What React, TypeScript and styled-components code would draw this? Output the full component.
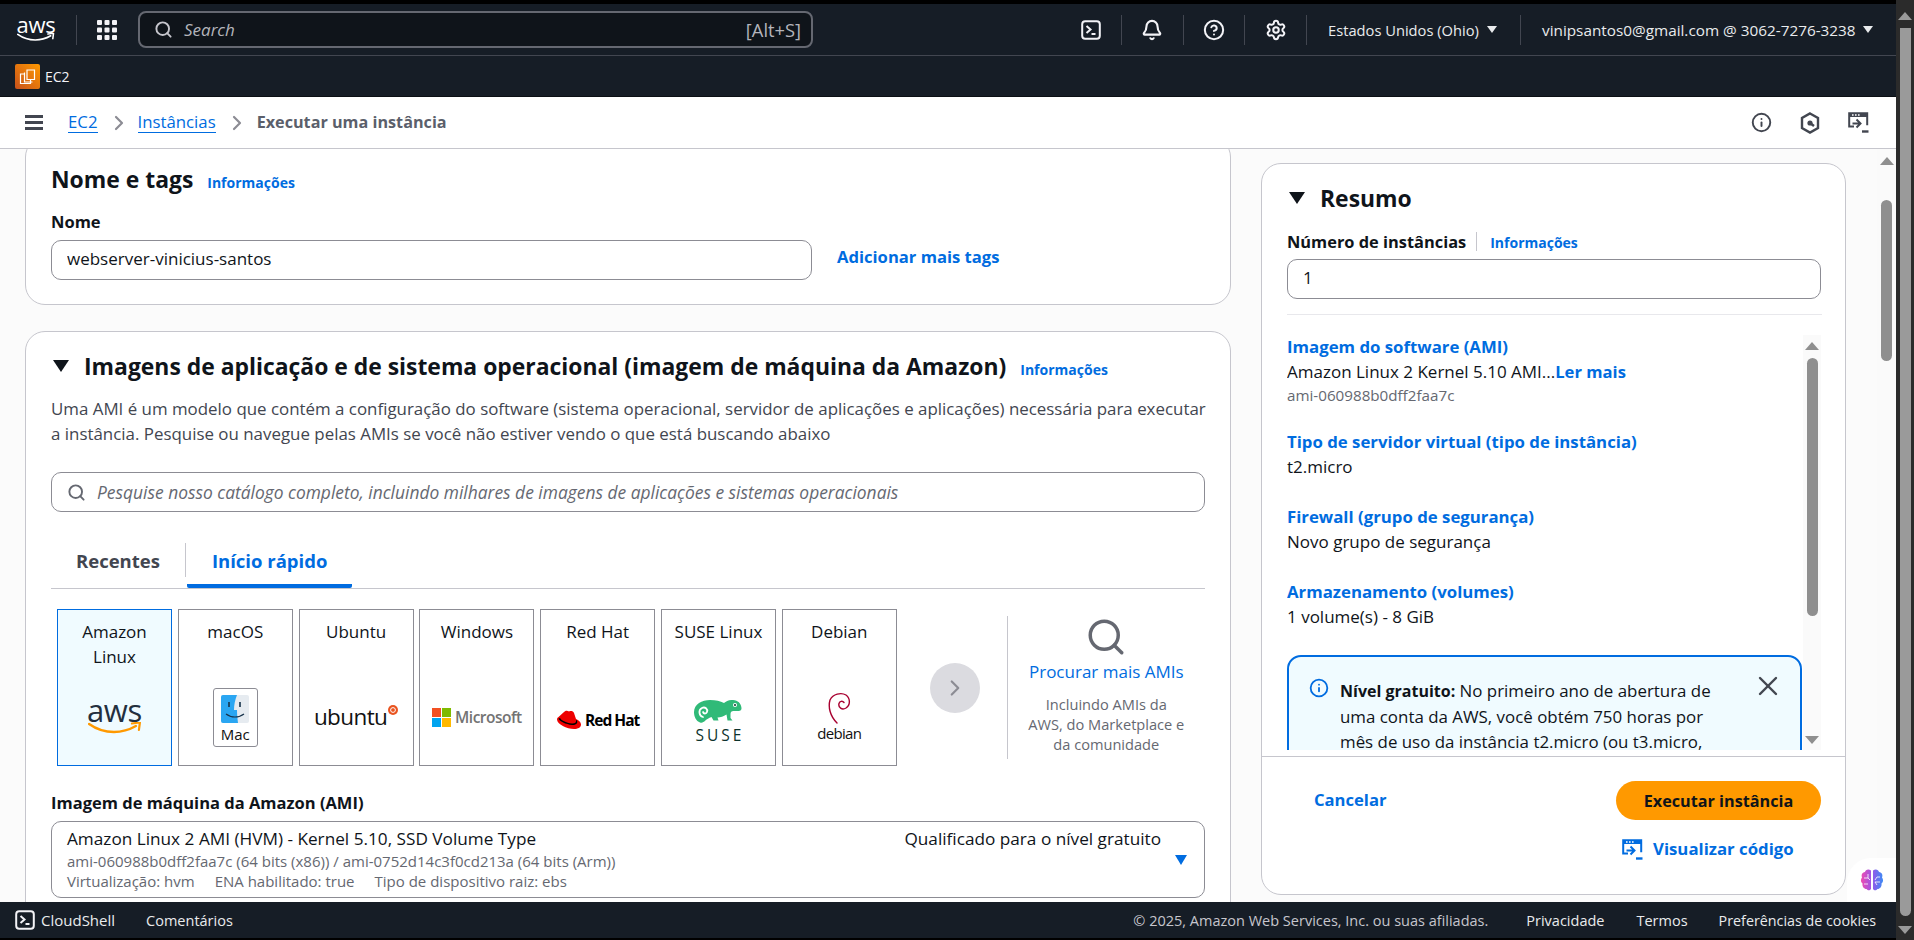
import React from 'react';
import styled, { createGlobalStyle } from 'styled-components';
import { Bell, ChevronRight, CircleHelp, Info, Search, Settings, X } from 'lucide-react';

const FONT = '"Open Sans", "Noto Sans", sans-serif';
const BLUE = '#006ce0';
const INK = '#0f141a';
const GREY = '#424650';
const SOFT = '#656871';
const NAVY = '#161d26';

const GlobalStyle = createGlobalStyle`
  * { box-sizing: border-box; }
  html, body { margin: 0; padding: 0; height: 940px; overflow: hidden; background: #2b2b2b; }
  body { font-family: ${FONT}; font-size: 17px; color: ${INK}; }
`;

const Shell = styled.div`
  display: flex;
  width: 1914px;
  height: 940px;
`;
const Page = styled.div`
  display: flex;
  flex-direction: column;
  width: 1896px;
  height: 940px;
`;
const BlackStrip = styled.div<{ $h: number }>`
  height: ${p => p.$h}px;
  background: #000;
  flex: none;
`;

/* ---------- scrollbars ---------- */
const Arrow = styled.div<{ $down?: boolean; $color: string; $w: number }>`
  width: 0;
  height: 0;
  flex: none;
  border-left: ${p => p.$w}px solid transparent;
  border-right: ${p => p.$w}px solid transparent;
  ${p => (p.$down ? `border-top: 8px solid ${p.$color};` : `border-bottom: 8px solid ${p.$color};`)}
`;
const PageBar = styled.div`
  width: 18px;
  height: 940px;
  background: #2b2b2b;
  display: flex;
  flex-direction: column;
  align-items: center;
  padding-top: 12px;
`;
const PageThumb = styled.div`
  width: 11px;
  height: 888px;
  margin: 8px 0 10px;
  background: #9a9a9a;
  border-radius: 0 0 6px 6px;
`;
const ContentBar = styled.div`
  width: 19px;
  flex: none;
  display: flex;
  flex-direction: column;
  align-items: center;
  padding-top: 8px;
  background: #fafafa;
`;
const ContentThumb = styled.div`
  width: 11px;
  height: 161px;
  margin-top: 35px;
  background: #8f8f8f;
  border-radius: 6px;
`;

/* ---------- top navigation ---------- */
const TopNav = styled.header`
  height: 52px;
  flex: none;
  display: flex;
  align-items: center;
  background: ${NAVY};
  border-bottom: 1px solid #424650;
  color: #e9ebed;
`;
const LogoWrap = styled.div<{ $w: number }>`
  width: ${p => p.$w}px;
  display: flex;
  flex-direction: column;
  align-items: center;
  flex: none;
`;
const LogoWord = styled.span<{ $size: number; $color: string }>`
  font-family: "Open Sans", sans-serif;
  font-size: ${p => p.$size}px;
  line-height: ${p => Math.round(p.$size * 0.72)}px;
  font-weight: 500;
  letter-spacing: -0.3px;
  color: ${p => p.$color};
`;
const NavDivider = styled.div<{ $ml: number }>`
  width: 1px;
  height: 30px;
  margin-left: ${p => p.$ml}px;
  background: #424650;
  flex: none;
`;
const Slot = styled.div<{ $ml: number; $c?: string }>`
  margin-left: ${p => p.$ml}px;
  display: flex;
  flex: none;
  color: ${p => p.$c ?? '#f3f3f7'};
`;
const TopSearch = styled.div`
  width: 675px;
  height: 37px;
  margin-left: 21px;
  display: flex;
  align-items: center;
  padding: 0 10px 0 14px;
  background: #0f141a;
  border: 2px solid #656871;
  border-radius: 8px;
  flex: none;
`;
const TopSearchHint = styled.span`
  margin-left: 11px;
  flex: 1;
  font-style: italic;
  font-size: 17px;
  color: #b4b4bb;
`;
const Shortcut = styled.span`
  font-size: 18.3px;
  color: #b4b4bb;
`;
const NavText = styled.span<{ $ml: number; $w: number; $size: number }>`
  margin-left: ${p => p.$ml}px;
  width: ${p => p.$w}px;
  flex: none;
  font-size: ${p => p.$size}px;
  white-space: nowrap;
  color: #e9ebed;
`;
const NavCaret = styled.div`
  width: 0;
  height: 0;
  border-left: 5px solid transparent;
  border-right: 5px solid transparent;
  border-top: 7px solid #e9ebed;
  flex: none;
`;

/* ---------- service bar ---------- */
const ServiceBar = styled.div`
  height: 41px;
  flex: none;
  display: flex;
  align-items: center;
  padding-left: 15px;
  background: ${NAVY};
  border-bottom: 1px solid #0b0f14;
`;
const ServiceName = styled.span`
  margin-left: 5px;
  font-size: 14px;
  color: #f3f3f7;
`;

/* ---------- breadcrumb ---------- */
const CrumbBar = styled.div`
  height: 52px;
  flex: none;
  display: flex;
  align-items: center;
  padding-left: 25px;
  background: #fff;
  border-bottom: 1px solid #c6c6cd;
`;
const Hamburger = styled.div`
  width: 18px;
  height: 15px;
  flex: none;
  border-top: 3px solid ${GREY};
  border-bottom: 3px solid ${GREY};
  position: relative;
  &::after {
    content: '';
    position: absolute;
    left: 0;
    right: 0;
    top: 3px;
    height: 3px;
    background: ${GREY};
  }
`;
const CrumbLink = styled.a<{ $ml: number }>`
  margin-left: ${p => p.$ml}px;
  font-size: 16.8px;
  color: ${BLUE};
  line-height: 20px;
  border-bottom: 1px solid ${BLUE};
`;
const CrumbCurrent = styled.span`
  margin-left: 8px;
  margin-bottom: 2px;
  font-size: 16.2px;
  font-weight: 700;
  color: #5b5f6b;
`;
const CrumbChevron = styled.div<{ $ml: number }>`
  margin-left: ${p => p.$ml}px;
  display: flex;
  color: #8c8c94;
`;
const CrumbTools = styled.div`
  margin-left: auto;
  margin-right: 27px;
  display: flex;
  align-items: center;
  gap: 28px;
  color: ${GREY};
`;

/* ---------- content ---------- */
const Main = styled.main`
  flex: 1;
  min-height: 0;
  position: relative;
  display: flex;
  overflow: hidden;
  background: #fbfbfb;
`;
const Column = styled.div`
  width: 1231px;
  flex: none;
  padding-left: 25px;
`;
const Panel = styled.section<{ $first?: boolean }>`
  background: #fff;
  border: 1px solid #c6c6cd;
  border-radius: 20px;
  padding: ${p => (p.$first ? '26px' : '19px')} 25px ${p => (p.$first ? '24px' : '30px')};
  margin-top: ${p => (p.$first ? '-12px' : '26px')};
`;
const HeadingRow = styled.div`
  display: flex;
  align-items: center;
  height: 30px;
`;
const Heading = styled.h2<{ $ml?: number }>`
  margin: 0 0 0 ${p => p.$ml ?? 0}px;
  padding-top: 2px;
  font-size: 22.9px;
  line-height: 30px;
  font-weight: 700;
  color: ${INK};
  white-space: nowrap;
`;
const Triangle = styled.div`
  width: 0;
  height: 0;
  margin-left: 2px;
  flex: none;
  border-left: 8px solid transparent;
  border-right: 8px solid transparent;
  border-top: 12px solid ${INK};
`;
const InfoLink = styled.a<{ $ml: number; $mt?: number }>`
  margin-left: ${p => p.$ml}px;
  margin-top: ${p => p.$mt ?? 6}px;
  font-size: 14px;
  font-weight: 700;
  color: ${BLUE};
  white-space: nowrap;
`;
const Label = styled.div<{ $mt: number }>`
  margin-top: ${p => p.$mt}px;
  font-size: 16.5px;
  line-height: 22px;
  font-weight: 700;
  color: ${INK};
`;
const InputRow = styled.div`
  display: flex;
  align-items: center;
  margin-top: 7px;
`;
const TextInput = styled.input<{ $w: number }>`
  width: ${p => p.$w}px;
  height: 40px;
  padding: 0 15px 3px;
  background: #fff;
  border: 1px solid #8c8c94;
  border-radius: 10px;
  font: 17px ${FONT};
  color: ${INK};
  outline: none;
`;
const BoldLink = styled.a<{ $ml?: number; $mb?: number }>`
  margin-left: ${p => p.$ml ?? 0}px;
  margin-bottom: ${p => p.$mb ?? 0}px;
  font-size: 16.6px;
  font-weight: 700;
  color: ${BLUE};
  white-space: nowrap;
`;
const Description = styled.p`
  margin: 15px -8px 0 0;
  font-size: 16.9px;
  line-height: 25px;
  color: ${GREY};
`;
const SearchBox = styled.div`
  height: 40px;
  margin-top: 26px;
  display: flex;
  align-items: center;
  gap: 11px;
  padding: 0 15px;
  border: 1px solid #8c8c94;
  border-radius: 10px;
  color: ${SOFT};
`;
const SearchInput = styled.input`
  flex: 1;
  border: 0;
  outline: none;
  padding: 0;
  font: italic 17.4px ${FONT};
  &::placeholder { color: ${SOFT}; opacity: 1; }
`;

/* ---------- tabs ---------- */
const Tabs = styled.div`
  height: 51px;
  margin-top: 26px;
  display: flex;
  align-items: flex-start;
  border-bottom: 1px solid #c6c6cd;
`;
const Tab = styled.div<{ $active?: boolean }>`
  height: 50px;
  padding: 10px 25px 0;
  font-size: 18.5px;
  line-height: 26px;
  font-weight: 700;
  white-space: nowrap;
  color: ${p => (p.$active ? BLUE : GREY)};
  ${p => p.$active && `border-bottom: 4px solid ${BLUE}; border-radius: 0 0 2px 2px; margin-left: 1px;`}
`;
const TabDivider = styled.div`
  width: 1px;
  height: 34px;
  margin-top: 5px;
  background: #c6c6cd;
`;

/* ---------- AMI picker ---------- */
const Carousel = styled.div`
  display: flex;
  align-items: stretch;
  margin-top: 20px;
  padding-left: 6px;
`;
const Cards = styled.div`
  display: flex;
  gap: 5.8px;
  flex: none;
`;
const Card = styled.div<{ $selected?: boolean }>`
  width: 115px;
  height: 157px;
  display: grid;
  grid-template-rows: 59px 1fr;
  justify-items: center;
  align-items: center;
  border: 1px solid ${p => (p.$selected ? BLUE : '#8c8c94')};
  background: ${p => (p.$selected ? '#f0fbff' : '#fff')};
  overflow: hidden;
`;
const CardTitle = styled.div`
  align-self: start;
  padding-top: 9px;
  font-size: 17px;
  line-height: 25px;
  text-align: center;
  white-space: pre-line;
`;
const NextBtn = styled.div`
  width: 50px;
  height: 50px;
  margin: 54px 27px 0 33px;
  flex: none;
  display: flex;
  align-items: center;
  justify-content: center;
  border-radius: 50%;
  background: #dbdbe0;
  color: #8c8c94;
`;
const Browse = styled.div`
  width: 198px;
  height: 143px;
  margin-top: 7px;
  flex: none;
  display: flex;
  flex-direction: column;
  align-items: center;
  border-left: 1px solid #c6c6cd;
  color: ${SOFT};
`;
const BrowseLink = styled.a`
  margin-top: 2px;
  font-size: 17px;
  line-height: 24px;
  color: ${BLUE};
  white-space: nowrap;
`;
const BrowseText = styled.div`
  margin-top: 10px;
  font-size: 14.6px;
  line-height: 20px;
  color: ${SOFT};
  text-align: center;
  white-space: pre-line;
`;
const Select = styled.div`
  height: 77px;
  margin-top: 7px;
  display: flex;
  padding: 5px 17px 0 15px;
  border: 1px solid #8c8c94;
  border-radius: 10px;
`;
const SelectMain = styled.div`
  flex: 1;
`;
const SelectTitle = styled.div`
  font-size: 17.2px;
  line-height: 24px;
`;
const SelectMeta = styled.div`
  display: flex;
  gap: 20px;
  font-size: 15px;
  line-height: 20px;
  color: ${SOFT};
`;
const Eligible = styled.div`
  font-size: 17.2px;
  line-height: 24px;
  white-space: nowrap;
`;
const SelectCaret = styled.div`
  width: 0;
  height: 0;
  margin: 28px 0 0 14px;
  flex: none;
  border-left: 6px solid transparent;
  border-right: 6px solid transparent;
  border-top: 10px solid ${BLUE};
`;

/* ---------- summary ---------- */
const Summary = styled.aside`
  width: 585px;
  height: 732px;
  margin: 14px 31px 0 30px;
  flex: none;
  display: flex;
  flex-direction: column;
  padding-top: 19px;
  background: #fff;
  border: 1px solid #c6c6cd;
  border-radius: 20px;
`;
const SummaryBody = styled.div`
  padding: 0 23px 0 25px;
`;
const Field = styled.div`
  display: flex;
  align-items: center;
  height: 22px;
  margin-top: 17px;
  font-size: 16.4px;
  font-weight: 700;
`;
const FieldDivider = styled.div`
  width: 1px;
  height: 19px;
  margin-left: 10px;
  background: #c6c6cd;
`;
const Rule = styled.hr<{ $strong?: boolean; $mt: number }>`
  height: 1px;
  margin: ${p => p.$mt}px 0 0;
  border: 0;
  background: ${p => (p.$strong ? '#c6c6cd' : '#e8e8ec')};
`;
const ScrollArea = styled.div`
  height: 415px;
  margin: 20px 24px 0 25px;
  display: flex;
  overflow: hidden;
  flex: none;
`;
const ScrollBody = styled.div`
  width: 516px;
  flex: none;
`;
const ScrollBar = styled.div`
  width: 18px;
  flex: none;
  display: flex;
  flex-direction: column;
  align-items: center;
  padding: 7px 0 6px;
  background: #fafafa;
`;
const ScrollThumb = styled.div`
  width: 11px;
  height: 258px;
  margin-top: 8px;
  margin-bottom: auto;
  border-radius: 6px;
  background: #8f8f8f;
`;
const Group = styled.div`
  margin-bottom: 25px;
`;
const GroupTitle = styled.a`
  display: block;
  font-size: 16.8px;
  line-height: 24px;
  font-weight: 700;
  color: ${BLUE};
  white-space: nowrap;
`;
const GroupValue = styled.div`
  font-size: 17px;
  line-height: 26px;
  white-space: nowrap;
`;
const GroupHint = styled.div`
  font-size: 15.2px;
  line-height: 20px;
  color: ${SOFT};
`;
const MoreLink = styled.a`
  font-size: 16.6px;
  font-weight: 700;
  color: ${BLUE};
`;
const Alert = styled.div`
  width: 515px;
  height: 130px;
  margin-top: 25px;
  display: flex;
  padding: 21px 0 0 20px;
  background: #f0fbff;
  border: 2px solid ${BLUE};
  border-radius: 14px;
  color: ${BLUE};
`;
const AlertText = styled.div`
  width: 390px;
  margin-left: 11px;
  flex: none;
  font-size: 16.9px;
  line-height: 25px;
  color: ${INK};
  b { font-size: 16px; font-weight: 700; }
`;
const AlertClose = styled.div`
  margin: -8px 0 0 22px;
  color: ${GREY};
  display: flex;
`;
const Actions = styled.div`
  display: grid;
  grid-template-columns: 1fr 205px;
  row-gap: 17px;
  align-items: center;
  padding: 24px 24px 0 52px;
`;
const RunButton = styled.button`
  height: 39px;
  border: 0;
  border-radius: 20px;
  background: #ff9900;
  font: 700 16.2px ${FONT};
  color: ${INK};
`;
const CodeLink = styled.a`
  grid-column: 2;
  display: flex;
  align-items: center;
  gap: 10px;
  padding-left: 6px;
  font-size: 16.8px;
  line-height: 24px;
  font-weight: 700;
  color: ${BLUE};
  white-space: nowrap;
`;
const BrainBubble = styled.div`
  position: absolute;
  right: 0;
  bottom: 0;
  width: 49px;
  height: 44px;
  display: flex;
  align-items: center;
  justify-content: center;
  background: #fff;
  border-radius: 24px 0 0 0;
`;

/* ---------- footer ---------- */
const Footer = styled.footer`
  height: 36px;
  flex: none;
  display: flex;
  align-items: center;
  padding: 0 20px 0 15px;
  background: ${NAVY};
  color: #e9ebed;
`;
const FootItem = styled.span<{ $ml?: number; $auto?: boolean; $soft?: boolean; $size?: number }>`
  margin-left: ${p => (p.$auto ? 'auto' : `${p.$ml ?? 0}px`)};
  font-size: ${p => p.$size ?? 14.5}px;
  color: ${p => (p.$soft ? '#c6c6cd' : '#e9ebed')};
  white-space: nowrap;
`;

/* ---------- logos ---------- */
const MsWord = styled.span`
  font-size: 15.5px;
  font-weight: 600;
  letter-spacing: -0.5px;
  color: #737373;
`;
const MsLogo = styled.div`
  display: flex;
  align-items: center;
  gap: 4px;
`;
const UbuntuLogo = styled.div`
  display: flex;
  align-items: flex-start;
  gap: 1px;
`;
const UbuntuWord = styled.span`
  font-size: 22.5px;
  line-height: 28px;
  letter-spacing: -0.6px;
  color: #111;
`;
const RedHatLogo = styled.div`
  display: flex;
  align-items: center;
  gap: 3px;
  margin-top: 6px;
`;
const RedHatWord = styled.span`
  font-size: 15.5px;
  font-weight: 700;
  letter-spacing: -1px;
  color: #000;
`;
const MacBox = styled.div`
  width: 45px;
  height: 59px;
  display: flex;
  flex-direction: column;
  align-items: center;
  padding-top: 6px;
  border: 1px solid #8c8c94;
  border-radius: 3px;
`;
const MacWord = styled.span`
  font-size: 15px;
  line-height: 22px;
  font-weight: 500;
  color: #111;
`;
const SuseLogo = styled.div`
  display: flex;
  flex-direction: column;
  align-items: center;
  margin-top: 8px;
`;
const SuseWord = styled.span`
  margin-top: 3px;
  margin-right: -3px;
  font-size: 15.5px;
  line-height: 17px;
  font-weight: 500;
  letter-spacing: 3px;
  color: #0c322c;
`;
const DebianLogo = styled.div`
  display: flex;
  flex-direction: column;
  align-items: center;
`;
const DebianWord = styled.span`
  margin-top: 1px;
  font-size: 15px;
  line-height: 17px;
  letter-spacing: -0.7px;
  color: #111;
`;

function Aws({ width, size, color }: { width: number; size: number; color: string }) {
  const smile = color === '#fff' ? '#fff' : '#ff9900';
  return (
    <LogoWrap $w={width}>
      <LogoWord $size={size} $color={color}>aws</LogoWord>
      <svg width={width} height={width * 0.24} viewBox="0 0 54 13" style={{ marginTop: 1 }}>
        <path d="M1 2c7 5 16 8 25 8 8 0 15-2 22-6" fill="none" stroke={smile} strokeWidth="2.4" strokeLinecap="round" />
        <path d="M44 1.5 52 .5 51 8" fill="none" stroke={smile} strokeWidth="2.2" strokeLinecap="round" strokeLinejoin="round" />
      </svg>
    </LogoWrap>
  );
}

function Terminal({ size }: { size: number }) {
  return (
    <svg width={size} height={size} viewBox="0 0 20 20" fill="none" stroke="currentColor" strokeWidth="2">
      <rect x="1.2" y="1.2" width="17.6" height="17.6" rx="3" />
      <path d="M5.5 6 9.5 9.5 5.5 13M10.5 14h4" />
    </svg>
  );
}

function CodeView({ color }: { color: string }) {
  return (
    <svg width="21" height="21" viewBox="0 0 21 21" fill="none" stroke={color} strokeWidth="2">
      <path d="M6 14.5H1.2V1.2h18v12" />
      <path d="M1.2 1.2h18V5H1.2z" fill={color} stroke="none" />
      <path d="M4 3h1.6M7 3h1.6M10 3h1.6" stroke="#fff" strokeWidth="1.4" />
      <path d="M4.5 11.5h7M8.5 7.5l4 4-4 4" />
      <path d="M14 19.5h6.5" strokeWidth="2.4" />
    </svg>
  );
}

function Finder() {
  return (
    <svg width="28" height="28" viewBox="0 0 28 28">
      <rect width="28" height="28" rx="2" fill="#e6ebf0" />
      <path d="M0 2a2 2 0 0 1 2-2h14c-2 5-3 10-3 15h3c0 4 .5 9 1 13H2a2 2 0 0 1-2-2z" fill="#2aa6f2" />
      <path d="M8 7v5M19 7v5" stroke="#16324a" strokeWidth="1.6" />
      <path d="M5 19c5 4 13 4 18 0" fill="none" stroke="#16324a" strokeWidth="1.2" />
    </svg>
  );
}

function AmiCard({ title, selected, children }: { title: string; selected?: boolean; children: React.ReactNode }) {
  return (
    <Card $selected={selected}>
      <CardTitle>{title}</CardTitle>
      {children}
    </Card>
  );
}

export default function App() {
  return (
    <>
      <GlobalStyle />
      <Shell>
        <Page>
          <BlackStrip $h={4} />
          <TopNav>
            <Slot $ml={17} $c="#fff"><Aws width={38} size={22} color="#fff" /></Slot>
            <NavDivider $ml={21} />
            <Slot $ml={20}>
              <svg width="20" height="20" viewBox="0 0 20 20" fill="#f3f3f7">
                {[0, 7.5, 15].flatMap(y => [0, 7.5, 15].map(x => <rect key={`${x}-${y}`} x={x} y={y} width="5" height="5" rx="1" />))}
              </svg>
            </Slot>
            <TopSearch>
              <Search size={19} color="#c6c6cd" strokeWidth={2.4} />
              <TopSearchHint>Search</TopSearchHint>
              <Shortcut>[Alt+S]</Shortcut>
            </TopSearch>
            <Slot $ml={268}><Terminal size={20} /></Slot>
            <NavDivider $ml={20} />
            <Slot $ml={19}><Bell size={22} strokeWidth={2.3} /></Slot>
            <NavDivider $ml={20} />
            <Slot $ml={19}><CircleHelp size={22} strokeWidth={2.2} /></Slot>
            <NavDivider $ml={19} />
            <Slot $ml={20}><Settings size={22} strokeWidth={2.2} /></Slot>
            <NavDivider $ml={19} />
            <NavText $ml={21} $w={159} $size={14.7}>Estados Unidos (Ohio)</NavText>
            <NavCaret />
            <NavDivider $ml={23} />
            <NavText $ml={21} $w={321} $size={15.3}>vinipsantos0@gmail.com @ 3062-7276-3238</NavText>
            <NavCaret />
          </TopNav>
          <ServiceBar>
            <svg width="25" height="25" viewBox="0 0 25 25">
              <defs>
                <linearGradient id="ec2" x1="0" y1="1" x2="1" y2="0">
                  <stop offset="0" stopColor="#c8511b" />
                  <stop offset="1" stopColor="#ff9900" />
                </linearGradient>
              </defs>
              <rect width="25" height="25" rx="2" fill="url(#ec2)" />
              <g fill="none" stroke="#fff" strokeWidth="1.2">
                <path d="M9 10H5.5v9.5h10V16" />
                <path d="M12 6h7.5v9.5H12z" />
                <path d="M9.5 8.5V18h8" />
              </g>
            </svg>
            <ServiceName>EC2</ServiceName>
          </ServiceBar>
          <CrumbBar>
            <Hamburger />
            <CrumbLink $ml={25}>EC2</CrumbLink>
            <CrumbChevron $ml={9}><ChevronRight size={24} strokeWidth={2.2} /></CrumbChevron>
            <CrumbLink $ml={7}>Instâncias</CrumbLink>
            <CrumbChevron $ml={9}><ChevronRight size={24} strokeWidth={2.2} /></CrumbChevron>
            <CrumbCurrent>Executar uma instância</CrumbCurrent>
            <CrumbTools>
              <Info size={21} strokeWidth={2.2} />
              <svg width="20" height="22" viewBox="0 0 20 22" fill="none" stroke={GREY} strokeWidth="2.4">
                <path d="M10 1.5 18 6v10l-8 4.5L2 16V6z" />
                <circle cx="10" cy="11" r="2.6" fill={GREY} stroke="none" />
                <path d="M10 11l4 3" />
              </svg>
              <CodeView color={GREY} />
            </CrumbTools>
          </CrumbBar>
          <Main>
            <Column>
              <Panel $first>
                <HeadingRow>
                  <Heading>Nome e tags</Heading>
                  <InfoLink $ml={14}>Informações</InfoLink>
                </HeadingRow>
                <Label $mt={17}>Nome</Label>
                <InputRow>
                  <TextInput $w={761} defaultValue="webserver-vinicius-santos" />
                  <BoldLink $ml={25} $mb={7}>Adicionar mais tags</BoldLink>
                </InputRow>
              </Panel>
              <Panel>
                <HeadingRow>
                  <Triangle />
                  <Heading $ml={15}>Imagens de aplicação e de sistema operacional (imagem de máquina da Amazon)</Heading>
                  <InfoLink $ml={14}>Informações</InfoLink>
                </HeadingRow>
                <Description>
                  Uma AMI é um modelo que contém a configuração do software (sistema operacional, servidor de aplicações e aplicações) necessária para executar a instância. Pesquise ou navegue pelas AMIs se você não estiver vendo o que está buscando abaixo
                </Description>
                <SearchBox>
                  <Search size={19} strokeWidth={2.4} />
                  <SearchInput placeholder="Pesquise nosso catálogo completo, incluindo milhares de imagens de aplicações e sistemas operacionais" />
                </SearchBox>
                <Tabs>
                  <Tab>Recentes</Tab>
                  <TabDivider />
                  <Tab $active>Início rápido</Tab>
                </Tabs>
                <Carousel>
                  <Cards>
                    <AmiCard title={'Amazon\nLinux'} selected>
                      <Aws width={54} size={31} color="#232f3e" />
                    </AmiCard>
                    <AmiCard title="macOS">
                      <MacBox>
                        <Finder />
                        <MacWord>Mac</MacWord>
                      </MacBox>
                    </AmiCard>
                    <AmiCard title="Ubuntu">
                      <UbuntuLogo>
                        <UbuntuWord>ubuntu</UbuntuWord>
                        <svg width="10" height="10" viewBox="0 0 10 10" style={{ marginTop: 2 }}>
                          <circle cx="5" cy="5" r="5" fill="#e95420" />
                          <circle cx="5" cy="5" r="2.4" fill="none" stroke="#fff" strokeWidth="1" />
                        </svg>
                      </UbuntuLogo>
                    </AmiCard>
                    <AmiCard title="Windows">
                      <MsLogo>
                        <svg width="19" height="19" viewBox="0 0 19 19">
                          <rect width="9" height="9" fill="#f25022" />
                          <rect x="10" width="9" height="9" fill="#7fba00" />
                          <rect y="10" width="9" height="9" fill="#00a4ef" />
                          <rect x="10" y="10" width="9" height="9" fill="#ffb900" />
                        </svg>
                        <MsWord>Microsoft</MsWord>
                      </MsLogo>
                    </AmiCard>
                    <AmiCard title="Red Hat">
                      <RedHatLogo>
                        <svg width="26" height="20" viewBox="0 0 26 20">
                          <path d="M8 2c2-2 4-1 5-.5 2-.8 4-.5 5 1.5l2 6c2.5 1 5 3 5 5.5 0 3-3 4.5-7 4.5-7 0-17-5-17-9.5 0-1 .5-2 1.500-2.500z" fill="#e00" />
                          <path d="M4 8c1 2 6 5 12 5.5 3 .2 4.5-1 4-3.5l1 .4c1 3-1 4.6-5 4.5C10 14.6 3 11 2.5 8.5z" fill="#000" />
                        </svg>
                        <RedHatWord>Red Hat</RedHatWord>
                      </RedHatLogo>
                    </AmiCard>
                    <AmiCard title="SUSE Linux">
                      <SuseLogo>
                        <svg width="48" height="25" viewBox="0 0 48 25">
                          <path d="M0 13C0 5 8 1 16 1c6 0 10 1 14 3 2-2 5-3.5 9-3 5 .5 8 3 8.5 8 .2 2-1 3-3 3h-5c-2 0-3 1-3 3v4l2 2.5h-5l-1-6c-3 2-6 3-9 3l1 3h-5l-2-3.5C11 20 10 25 6 23.5 2 22 0 18 0 13z" fill="#30ba78" />
                          <path d="M9 18c-4-1-5-7-1-9 3-1.5 6 1 5 4-.7 2-3.5 2-4 0" fill="none" stroke="#fff" strokeWidth="1.8" strokeLinecap="round" />
                          <circle cx="41" cy="6" r="2" fill="#fff" />
                          <circle cx="41" cy="6" r="1" fill="#0c322c" />
                        </svg>
                        <SuseWord>SUSE</SuseWord>
                      </SuseLogo>
                    </AmiCard>
                    <AmiCard title="Debian">
                      <DebianLogo>
                        <svg width="24" height="32" viewBox="0 0 24 32" fill="none" stroke="#a80030" strokeWidth="1.4" strokeLinecap="round">
                          <path d="M10 31C3 24 1 15 3 8 6 2 14 0 19 3c4.5 3.5 4.5 10 0 13-4 2.5-8-.5-7-4.5.7-2.5 3.5-3 5-1" />
                        </svg>
                        <DebianWord>debian</DebianWord>
                      </DebianLogo>
                    </AmiCard>
                  </Cards>
                  <NextBtn><ChevronRight size={26} strokeWidth={2} /></NextBtn>
                  <Browse>
                    <Search size={42} strokeWidth={2} />
                    <BrowseLink>Procurar mais AMIs</BrowseLink>
                    <BrowseText>{'Incluindo AMIs da\nAWS, do Marketplace e\nda comunidade'}</BrowseText>
                  </Browse>
                </Carousel>
                <Label $mt={26}>Imagem de máquina da Amazon (AMI)</Label>
                <Select>
                  <SelectMain>
                    <SelectTitle>Amazon Linux 2 AMI (HVM) - Kernel 5.10, SSD Volume Type</SelectTitle>
                    <SelectMeta>ami-060988b0dff2faa7c (64 bits (x86)) / ami-0752d14c3f0cd213a (64 bits (Arm))</SelectMeta>
                    <SelectMeta>
                      <span>Virtualização: hvm</span>
                      <span>ENA habilitado: true</span>
                      <span>Tipo de dispositivo raiz: ebs</span>
                    </SelectMeta>
                  </SelectMain>
                  <Eligible>Qualificado para o nível gratuito</Eligible>
                  <SelectCaret />
                </Select>
              </Panel>
            </Column>
            <Summary>
              <SummaryBody>
                <HeadingRow>
                  <Triangle />
                  <Heading $ml={15}>Resumo</Heading>
                </HeadingRow>
                <Field>
                  Número de instâncias
                  <FieldDivider />
                  <InfoLink $ml={13} $mt={2}>Informações</InfoLink>
                </Field>
                <InputRow>
                  <TextInput $w={534} defaultValue="1" />
                </InputRow>
                <Rule $mt={15} />
              </SummaryBody>
              <ScrollArea>
                <ScrollBody>
                  <Group>
                    <GroupTitle>Imagem do software (AMI)</GroupTitle>
                    <GroupValue>Amazon Linux 2 Kernel 5.10 AMI...<MoreLink>Ler mais</MoreLink></GroupValue>
                    <GroupHint>ami-060988b0dff2faa7c</GroupHint>
                  </Group>
                  <Group>
                    <GroupTitle>Tipo de servidor virtual (tipo de instância)</GroupTitle>
                    <GroupValue>t2.micro</GroupValue>
                  </Group>
                  <Group>
                    <GroupTitle>Firewall (grupo de segurança)</GroupTitle>
                    <GroupValue>Novo grupo de segurança</GroupValue>
                  </Group>
                  <Group>
                    <GroupTitle>Armazenamento (volumes)</GroupTitle>
                    <GroupValue>1 volume(s) - 8 GiB</GroupValue>
                  </Group>
                  <Alert>
                    <Info size={20} strokeWidth={2.2} style={{ flex: 'none' }} />
                    <AlertText>
                      <b>Nível gratuito:</b> No primeiro ano de abertura de uma conta da AWS, você obtém 750 horas por mês de uso da instância t2.micro (ou t3.micro,
                    </AlertText>
                    <AlertClose><X size={32} strokeWidth={1.8} /></AlertClose>
                  </Alert>
                </ScrollBody>
                <ScrollBar>
                  <Arrow $color="#8f8f8f" $w={7} />
                  <ScrollThumb />
                  <Arrow $down $color="#8f8f8f" $w={7} />
                </ScrollBar>
              </ScrollArea>
              <Rule $strong $mt={6} />
              <Actions>
                <BoldLink $mb={2}>Cancelar</BoldLink>
                <RunButton>Executar instância</RunButton>
                <CodeLink><CodeView color={BLUE} />Visualizar código</CodeLink>
              </Actions>
            </Summary>
            <ContentBar>
              <Arrow $color="#8f8f8f" $w={7} />
              <ContentThumb />
            </ContentBar>
            <BrainBubble>
              <svg width="24" height="24" viewBox="0 0 24 24">
                <defs>
                  <linearGradient id="brain" x1="0" y1="0" x2="1" y2="0">
                    <stop offset="0" stopColor="#f04bb0" />
                    <stop offset="0.5" stopColor="#9a55e8" />
                    <stop offset="1" stopColor="#3c8cf5" />
                  </linearGradient>
                </defs>
                <path d="M11 2.5C8.5.5 5.5 1.5 5 4 2 4.5 1 7 2 9.5.5 11.5.5 14 2.5 15.5 2 18.5 4 21 6.5 21c1.5 2 3.5 1.5 4.5 0zM13 2.5c2.5-2 5.5-1 6 1.500 3 .5 4 3 3 5.500 1.500 2 1.500 4.500-.5 6 .5 3-1.500 5.500-4 5.500-1.500 2-3.500 1.500-4.500 0z" fill="url(#brain)" />
                <path d="M4 10h4l2 2M8 6v4M4 16h4M20 9h-3l-2 3M17 17l-2-3h5" fill="none" stroke="#fff" strokeWidth=".8" />
              </svg>
            </BrainBubble>
          </Main>
          <Footer>
            <Slot $ml={0} $c="#f3f3f7"><Terminal size={20} /></Slot>
            <FootItem $ml={6} $size={15}>CloudShell</FootItem>
            <FootItem $ml={31}>Comentários</FootItem>
            <FootItem $auto $soft>© 2025, Amazon Web Services, Inc. ou suas afiliadas.</FootItem>
            <FootItem $ml={38}>Privacidade</FootItem>
            <FootItem $ml={32}>Termos</FootItem>
            <FootItem $ml={31} $size={14.3}>Preferências de cookies</FootItem>
          </Footer>
          <BlackStrip $h={2} />
        </Page>
        <PageBar>
          <Arrow $color="#9a9a9a" $w={7} />
          <PageThumb />
          <Arrow $down $color="#9a9a9a" $w={7} />
        </PageBar>
      </Shell>
    </>
  );
}
